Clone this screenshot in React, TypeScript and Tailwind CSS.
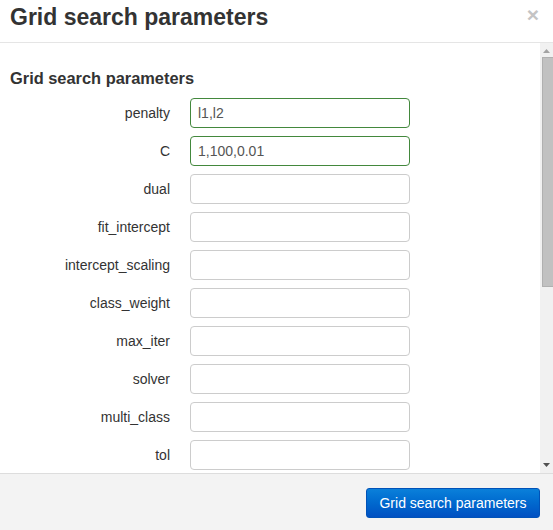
import React from "react";

const rows: { label: string; value: string; valid?: boolean }[] = [
  { label: "penalty", value: "l1,l2", valid: true },
  { label: "C", value: "1,100,0.01", valid: true },
  { label: "dual", value: "" },
  { label: "fit_intercept", value: "" },
  { label: "intercept_scaling", value: "" },
  { label: "class_weight", value: "" },
  { label: "max_iter", value: "" },
  { label: "solver", value: "" },
  { label: "multi_class", value: "" },
  { label: "tol", value: "" },
];

export default function App() {
  return (
    <div
      className="w-[553px] h-[530px] bg-white flex flex-col overflow-hidden text-[#333]"
      style={{ fontFamily: '"Liberation Sans", Arial, sans-serif' }}
    >
      <div className="h-[43px] shrink-0 border-b border-[#e5e5e5] flex items-start justify-between pl-[10px] pr-[14px] pt-[3px]">
        <h1 className="text-[23px] leading-[28px] font-bold text-[#333]">Grid search parameters</h1>
        <span className="text-[21px] leading-[20px] font-bold text-[#c4c4c4] mt-[2px]">×</span>
      </div>
      <div className="h-[430px] shrink-0 flex overflow-hidden">
        <div className="flex-1 overflow-hidden pt-[25px] pl-[10px]">
          <h2 className="text-[16.4px] leading-[20px] font-bold text-[#333]">Grid search parameters</h2>
          <div className="mt-[10px] flex flex-col gap-[8px]">
            {rows.map((r) => (
              <div key={r.label} className="flex items-center h-[30px] shrink-0">
                <label className="w-[160px] text-right text-[14px] text-[#333]">{r.label}</label>
                <div
                  className={
                    r.valid
                      ? "ml-[20px] w-[220px] h-[30px] rounded-[4px] border border-[#43883d] px-[7px] flex items-center text-[14px] text-[#555]"
                      : "ml-[20px] w-[220px] h-[30px] rounded-[4px] border border-[#cccccc] px-[7px] flex items-center text-[14px] text-[#555]"
                  }
                >
                  {r.value}
                </div>
              </div>
            ))}
          </div>
        </div>
        <div className="w-[13px] shrink-0 bg-[#f1f1f1] flex flex-col items-start">
          <div className="h-[14px] w-full flex items-center justify-center">
            <svg width="7" height="4" viewBox="0 0 7 4" className="mt-[1px]">
              <polygon points="3.5,0 7,4 0,4" fill="#a3a3a3" />
            </svg>
          </div>
          <div className="ml-[2px] w-[11px] h-[230px] bg-[#c1c1c1] border border-[#b0b0b0] border-r-0" />
          <div className="flex-1" />
          <div className="h-[14px] w-full flex items-center justify-center mb-[1px]">
            <svg width="7" height="4" viewBox="0 0 7 4">
              <polygon points="0,0 7,0 3.5,4" fill="#505050" />
            </svg>
          </div>
        </div>
      </div>
      <div className="flex-1 border-t border-[#dddddd] bg-[#f3f3f3] flex justify-end items-start pt-[14px] pr-[13px]">
        <button className="w-[174px] h-[30px] rounded-[3px] border border-[#0052b8] bg-gradient-to-b from-[#0b80da] to-[#0150c2] text-white text-[14px] leading-[28px] whitespace-nowrap">
          Grid search parameters
        </button>
      </div>
    </div>
  );
}
